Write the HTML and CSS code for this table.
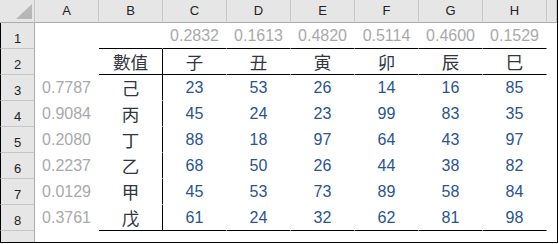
FILE: index.html
```html
<!DOCTYPE html>
<html lang="zh-Hant">
<head>
<meta charset="utf-8">
<title>Sheet</title>
<link rel="stylesheet" href="styles.css">
</head>
<body>
<div class="sheet">
  <div class="corner"><svg class="tri" width="16" height="15" viewBox="0 0 16 15"><polygon points="16,0 16,15 0,15" fill="#b7b7b7"/></svg></div>
  <div class="ch">A</div><div class="ch">B</div><div class="ch">C</div><div class="ch">D</div><div class="ch">E</div><div class="ch">F</div><div class="ch">G</div><div class="ch">H</div><div class="ch"></div>

  <div class="rh">1</div>
  <div class="c"></div><div class="c bb"></div>
  <div class="c dec bb">0.2832</div><div class="c dec bb">0.1613</div><div class="c dec bb">0.4820</div><div class="c dec bb">0.5114</div><div class="c dec bb">0.4600</div><div class="c dec bb">0.1529</div>
  <div class="c"></div>

  <div class="rh">2</div>
  <div class="c"></div><div class="c cjk bb br">數值</div>
  <div class="c cjk bb">子</div><div class="c cjk bb">丑</div><div class="c cjk bb">寅</div><div class="c cjk bb">卯</div><div class="c cjk bb">辰</div><div class="c cjk bb">巳</div>
  <div class="c"></div>

  <div class="rh">3</div>
  <div class="c dec">0.7787</div><div class="c cjk br">己</div>
  <div class="c num">23</div><div class="c num">53</div><div class="c num">26</div><div class="c num">14</div><div class="c num">16</div><div class="c num">85</div>
  <div class="c"></div>

  <div class="rh">4</div>
  <div class="c dec">0.9084</div><div class="c cjk br">丙</div>
  <div class="c num">45</div><div class="c num">24</div><div class="c num">23</div><div class="c num">99</div><div class="c num">83</div><div class="c num">35</div>
  <div class="c"></div>

  <div class="rh">5</div>
  <div class="c dec">0.2080</div><div class="c cjk br">丁</div>
  <div class="c num">88</div><div class="c num">18</div><div class="c num">97</div><div class="c num">64</div><div class="c num">43</div><div class="c num">97</div>
  <div class="c"></div>

  <div class="rh">6</div>
  <div class="c dec">0.2237</div><div class="c cjk br">乙</div>
  <div class="c num">68</div><div class="c num">50</div><div class="c num">26</div><div class="c num">44</div><div class="c num">38</div><div class="c num">82</div>
  <div class="c"></div>

  <div class="rh">7</div>
  <div class="c dec">0.0129</div><div class="c cjk br">甲</div>
  <div class="c num">45</div><div class="c num">53</div><div class="c num">73</div><div class="c num">89</div><div class="c num">58</div><div class="c num">84</div>
  <div class="c"></div>

  <div class="rh">8</div>
  <div class="c dec">0.3761</div><div class="c cjk br bb">戊</div>
  <div class="c num bb">61</div><div class="c num bb">24</div><div class="c num bb">32</div><div class="c num bb">62</div><div class="c num bb">81</div><div class="c num bb">98</div>
  <div class="c"></div>

  <div class="rh rh-last"></div>
  <div class="c"></div><div class="c"></div><div class="c"></div><div class="c"></div><div class="c"></div><div class="c"></div><div class="c"></div><div class="c"></div><div class="c"></div>
</div>
</body>
</html>
```

FILE: styles.css
```css
html, body {
  margin: 0;
  padding: 0;
  background: #ffffff;
}

.sheet {
  width: 557px;
  height: 242px;
  overflow: hidden;
  border-right: 1px solid #000;
  border-bottom: 1px solid #000;
  display: grid;
  grid-template-columns: 35px repeat(8, 64px) 10px;
  grid-template-rows: 23px repeat(8, 26px) 11px;
  font-family: "Liberation Sans", Arial, sans-serif;
}

.sheet > div {
  box-sizing: border-box;
  min-width: 0;
}

.corner {
  background: #e6e6e6;
  border-right: 1px solid #c6c6c6;
  border-bottom: 1px solid #ababab;
  position: relative;
}

.tri {
  position: absolute;
  right: 2px;
  bottom: 3px;
}

.ch {
  background: #e6e6e6;
  border-right: 1px solid #c6c6c6;
  border-bottom: 1px solid #ababab;
  font-size: 13px;
  line-height: 22px;
  color: #222;
  text-align: center;
}

.rh {
  background: #e6e6e6;
  border-left: 1px solid #000;
  border-right: 1px solid #ababab;
  border-bottom: 1px solid #c6c6c6;
  font-size: 13px;
  line-height: 13px;
  color: #222;
  display: flex;
  align-items: flex-end;
  justify-content: center;
  padding-bottom: 3px;
}

.rh-last {
  border-bottom: none;
}

.c {
  background: #fff;
  border-right: 1px solid transparent;
  border-bottom: 1px solid transparent;
  display: flex;
  align-items: flex-end;
  justify-content: center;
  padding-bottom: 4px;
  white-space: nowrap;
}

.bb { border-bottom-color: #000; }
.br { border-right-color: #000; }

.dec {
  font-size: 16px;
  line-height: 16px;
  color: #a9a9a9;
}

.num {
  font-size: 16px;
  line-height: 16px;
  color: #28548f;
}

.cjk {
  font-family: "Noto Sans CJK TC", "Noto Sans CJK SC", sans-serif;
  font-size: 17.5px;
  font-weight: 400;
  line-height: 25px;
  padding-bottom: 0;
  align-items: center;
  color: #2f3640;
}
```
